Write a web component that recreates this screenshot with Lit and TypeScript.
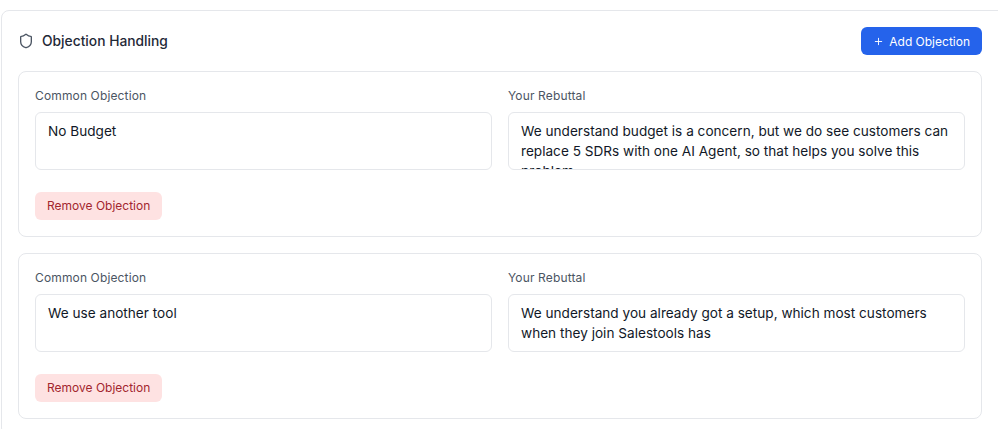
import { LitElement, html, css, svg } from "lit";
import { customElement } from "lit/decorators.js";

const shield = svg`<path d="M20 13c0 5-3.5 7.5-7.66 8.95a1 1 0 0 1-.67-.01C7.5 20.5 4 18 4 13V6a1 1 0 0 1 1-1c2 0 4.5-1.2 6.24-2.72a1.17 1.17 0 0 1 1.52 0C14.51 3.81 17 5 19 5a1 1 0 0 1 1 1z"/>`;
const plus = svg`<path d="M5 12h14"/><path d="M12 5v14"/>`;

const ITEMS = [
  {
    objection: "No Budget",
    rebuttal:
      "We understand budget is a concern, but we do see customers can replace 5 SDRs with one AI Agent, so that helps you solve this problem",
  },
  {
    objection: "We use another tool",
    rebuttal:
      "We understand you already got a setup, which most customers when they join Salestools has",
  },
];

@customElement("app-root")
export class AppRoot extends LitElement {
  static styles = css`
    :host {
      display: block;
      width: 998px;
      height: 429px;
      overflow: hidden;
      background: #fff;
      font-family: Inter, "Liberation Sans", sans-serif;
      color: #111827;
    }
    * {
      box-sizing: border-box;
    }
    .page {
      padding: 10px 0 0 1px;
    }
    .card {
      width: 1010px;
      border: 1px solid #e5e7eb;
      border-radius: 8px;
      padding: 16px;
      background: #fff;
    }
    .inner {
      width: 964px;
    }
    .header {
      display: flex;
      align-items: center;
      justify-content: space-between;
      height: 28px;
      margin-bottom: 16px;
    }
    .title {
      display: flex;
      align-items: center;
      gap: 8px;
      font-size: 13.8px;
      line-height: 20px;
      font-weight: 450;
      color: #1f2937;
    }
    .title svg {
      width: 16px;
      height: 16px;
      color: #4b5563;
    }
    svg {
      fill: none;
      stroke: currentColor;
      stroke-width: 2;
      stroke-linecap: round;
      stroke-linejoin: round;
      flex: none;
    }
    button {
      font: inherit;
      border: 0;
      cursor: pointer;
    }
    .add {
      display: flex;
      align-items: center;
      gap: 5px;
      height: 28px;
      padding: 0 12px;
      border-radius: 6px;
      background: #2563eb;
      color: #fff;
      font-size: 12px;
      font-weight: 400;
    }
    .add svg {
      width: 11px;
      height: 11px;
    }
    .list {
      display: flex;
      flex-direction: column;
      gap: 16px;
    }
    .item {
      border: 1px solid #e5e7eb;
      border-radius: 8px;
      padding: 16px;
    }
    .fields {
      display: grid;
      grid-template-columns: 1fr 1fr;
      gap: 16px;
      margin-bottom: 22px;
    }
    label {
      display: flex;
      flex-direction: column;
      gap: 8px;
      font-size: 12px;
      line-height: 16px;
      letter-spacing: 0.14px;
      color: #4b5563;
    }
    textarea {
      display: block;
      width: 100%;
      height: 58px;
      padding: 8px 12px;
      border: 1px solid #e5e7eb;
      border-radius: 6px;
      background: #fff;
      color: #111827;
      font: inherit;
      font-size: 13.6px;
      line-height: 20px;
      letter-spacing: 0.01px;
      resize: none;
      overflow: hidden;
      outline: none;
    }
    .remove {
      display: block;
      height: 28px;
      padding: 0 12px 2px;
      border-radius: 6px;
      background: #fee2e2;
      color: #a3262e;
      font-size: 12px;
    }
  `;

  render() {
    return html`
      <div class="page">
        <section class="card">
          <div class="inner">
            <div class="header">
              <div class="title">
                <svg viewBox="0 0 24 24">${shield}</svg>
                <span>Objection Handling</span>
              </div>
              <button class="add">
                <svg viewBox="0 0 24 24">${plus}</svg>
                <span>Add Objection</span>
              </button>
            </div>
            <div class="list">
              ${ITEMS.map(
                (it) => html`
                  <div class="item">
                    <div class="fields">
                      <label>
                        Common Objection
                        <textarea .value=${it.objection}></textarea>
                      </label>
                      <label>
                        Your Rebuttal
                        <textarea .value=${it.rebuttal}></textarea>
                      </label>
                    </div>
                    <button class="remove">Remove Objection</button>
                  </div>
                `
              )}
            </div>
          </div>
        </section>
      </div>
    `;
  }
}
